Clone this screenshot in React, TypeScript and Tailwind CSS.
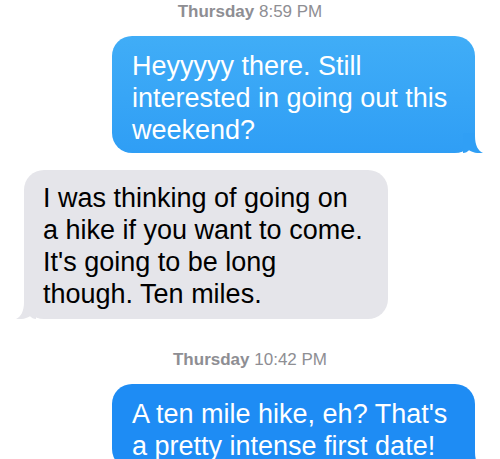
import React from "react";

function TailRight({ color }: { color: string }) {
  return (
    <svg
      className="absolute bottom-0 right-[-8px]"
      width="20"
      height="20"
      viewBox="0 0 20 20"
    >
      <path
        d="M0 0 L12 0 L12 3 C12 12 15 18 20 20 C15 20.6 10 19.6 6 17.2 C4.5 18.8 2.5 20 0 20 Z"
        fill={color}
      />
    </svg>
  );
}

function TailLeft({ color }: { color: string }) {
  return (
    <svg
      className="absolute bottom-0 left-[-8px]"
      width="20"
      height="20"
      viewBox="0 0 20 20"
    >
      <path
        d="M20 0 L8 0 L8 3 C8 12 5 18 0 20 C5 20.6 10 19.6 14 17.2 C15.5 18.8 17.5 20 20 20 Z"
        fill={color}
      />
    </svg>
  );
}

function Stamp({ day, time }: { day: string; time: string }) {
  return (
    <div className="text-center text-[17px] leading-[20px] text-[#8e8e93]">
      <span className="font-bold">{day}</span> {time}
    </div>
  );
}

export default function App() {
  return (
    <div
      className="w-[500px] h-[459px] overflow-hidden bg-white flex flex-col"
      style={{ fontFamily: '"Liberation Sans", Arial, sans-serif' }}
    >
      <div className="pt-[2px]">
        <Stamp day="Thursday" time="8:59 PM" />
      </div>
      <div className="mt-[14px] self-end mr-[25px] relative w-[363px]">
        <div className="rounded-[20px] bg-gradient-to-b from-[#40adf7] to-[#2f9ef5] text-white text-[27px] leading-[32px] pl-[20px] pr-[10px] pt-[14px] pb-[7px]">
          Heyyyyy there. Still interested in going out this weekend?
        </div>
        <TailRight color="#309ff5" />
      </div>
      <div className="mt-[17px] ml-[24px] relative w-[364px]">
        <div className="rounded-[20px] bg-[#e5e5ea] text-black text-[27px] leading-[32px] pl-[19px] pr-[23px] pt-[12px] pb-[9px]">
          I was thinking of going on a hike if you want to come. It's going to be long though. Ten miles.
        </div>
        <TailLeft color="#e5e5ea" />
      </div>
      <div className="mt-[31px]">
        <Stamp day="Thursday" time="10:42 PM" />
      </div>
      <div className="mt-[14px] self-end mr-[25px] relative w-[363px]">
        <div className="rounded-[20px] bg-[#1e8cf4] text-white text-[27px] leading-[32px] pl-[20px] pr-[10px] pt-[14px] pb-[7px]">
          A ten mile hike, eh? That's a pretty intense first date!
        </div>
        <TailRight color="#1e8cf4" />
      </div>
    </div>
  );
}
